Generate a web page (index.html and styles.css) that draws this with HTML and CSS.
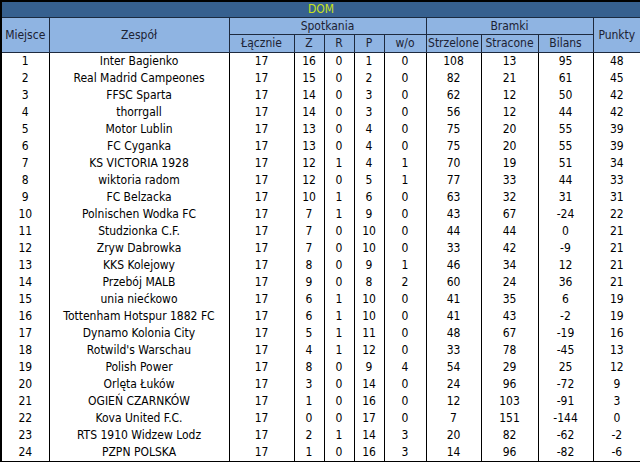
FILE: index.html
```html
<!DOCTYPE html>
<html lang="pl">
<head>
<meta charset="utf-8">
<title>DOM</title>
<link rel="stylesheet" href="styles.css">
</head>
<body>
<table class="league">
  <colgroup>
    <col class="c-pos"><col class="c-team"><col class="c-tot"><col class="c-s"><col class="c-s"><col class="c-s"><col class="c-wo"><col class="c-g1"><col class="c-g2"><col class="c-g3"><col class="c-pts">
  </colgroup>
  <thead>
    <tr class="title-row"><th colspan="11">DOM</th></tr>
    <tr class="head1">
      <th rowspan="2">Miejsce</th>
      <th rowspan="2">Zespół</th>
      <th colspan="5">Spotkania</th>
      <th colspan="3">Bramki</th>
      <th rowspan="2">Punkty</th>
    </tr>
    <tr class="head2">
      <th>Łącznie</th><th>Z</th><th>R</th><th>P</th><th>w/o</th>
      <th>Strzelone</th><th>Stracone</th><th>Bilans</th>
    </tr>
  </thead>
  <tbody>
    <tr><td>1</td><td>Inter Bagienko</td><td>17</td><td>16</td><td>0</td><td>1</td><td>0</td><td>108</td><td>13</td><td>95</td><td>48</td></tr>
    <tr><td>2</td><td>Real Madrid Campeones</td><td>17</td><td>15</td><td>0</td><td>2</td><td>0</td><td>82</td><td>21</td><td>61</td><td>45</td></tr>
    <tr><td>3</td><td>FFSC Sparta</td><td>17</td><td>14</td><td>0</td><td>3</td><td>0</td><td>62</td><td>12</td><td>50</td><td>42</td></tr>
    <tr><td>4</td><td>thorrgall</td><td>17</td><td>14</td><td>0</td><td>3</td><td>0</td><td>56</td><td>12</td><td>44</td><td>42</td></tr>
    <tr><td>5</td><td>Motor Lublin</td><td>17</td><td>13</td><td>0</td><td>4</td><td>0</td><td>75</td><td>20</td><td>55</td><td>39</td></tr>
    <tr><td>6</td><td>FC Cyganka</td><td>17</td><td>13</td><td>0</td><td>4</td><td>0</td><td>75</td><td>20</td><td>55</td><td>39</td></tr>
    <tr><td>7</td><td>KS VICTORIA 1928</td><td>17</td><td>12</td><td>1</td><td>4</td><td>1</td><td>70</td><td>19</td><td>51</td><td>34</td></tr>
    <tr><td>8</td><td>wiktoria radom</td><td>17</td><td>12</td><td>0</td><td>5</td><td>1</td><td>77</td><td>33</td><td>44</td><td>33</td></tr>
    <tr><td>9</td><td>FC Belzacka</td><td>17</td><td>10</td><td>1</td><td>6</td><td>0</td><td>63</td><td>32</td><td>31</td><td>31</td></tr>
    <tr><td>10</td><td>Polnischen Wodka FC</td><td>17</td><td>7</td><td>1</td><td>9</td><td>0</td><td>43</td><td>67</td><td>-24</td><td>22</td></tr>
    <tr><td>11</td><td>Studzionka C.F.</td><td>17</td><td>7</td><td>0</td><td>10</td><td>0</td><td>44</td><td>44</td><td>0</td><td>21</td></tr>
    <tr><td>12</td><td>Zryw Dabrowka</td><td>17</td><td>7</td><td>0</td><td>10</td><td>0</td><td>33</td><td>42</td><td>-9</td><td>21</td></tr>
    <tr><td>13</td><td>KKS Kolejowy</td><td>17</td><td>8</td><td>0</td><td>9</td><td>1</td><td>46</td><td>34</td><td>12</td><td>21</td></tr>
    <tr><td>14</td><td>Przebój MALB</td><td>17</td><td>9</td><td>0</td><td>8</td><td>2</td><td>60</td><td>24</td><td>36</td><td>21</td></tr>
    <tr><td>15</td><td>unia niećkowo</td><td>17</td><td>6</td><td>1</td><td>10</td><td>0</td><td>41</td><td>35</td><td>6</td><td>19</td></tr>
    <tr><td>16</td><td>Tottenham Hotspur 1882 FC</td><td>17</td><td>6</td><td>1</td><td>10</td><td>0</td><td>41</td><td>43</td><td>-2</td><td>19</td></tr>
    <tr><td>17</td><td>Dynamo Kolonia City</td><td>17</td><td>5</td><td>1</td><td>11</td><td>0</td><td>48</td><td>67</td><td>-19</td><td>16</td></tr>
    <tr><td>18</td><td>Rotwild's Warschau</td><td>17</td><td>4</td><td>1</td><td>12</td><td>0</td><td>33</td><td>78</td><td>-45</td><td>13</td></tr>
    <tr><td>19</td><td>Polish Power</td><td>17</td><td>8</td><td>0</td><td>9</td><td>4</td><td>54</td><td>29</td><td>25</td><td>12</td></tr>
    <tr><td>20</td><td>Orlęta Łuków</td><td>17</td><td>3</td><td>0</td><td>14</td><td>0</td><td>24</td><td>96</td><td>-72</td><td>9</td></tr>
    <tr><td>21</td><td>OGIEŃ CZARNKÓW</td><td>17</td><td>1</td><td>0</td><td>16</td><td>0</td><td>12</td><td>103</td><td>-91</td><td>3</td></tr>
    <tr><td>22</td><td>Kova United F.C.</td><td>17</td><td>0</td><td>0</td><td>17</td><td>0</td><td>7</td><td>151</td><td>-144</td><td>0</td></tr>
    <tr><td>23</td><td>RTS 1910 Widzew Lodz</td><td>17</td><td>2</td><td>1</td><td>14</td><td>3</td><td>20</td><td>82</td><td>-62</td><td>-2</td></tr>
    <tr><td>24</td><td>PZPN POLSKA</td><td>17</td><td>1</td><td>0</td><td>16</td><td>3</td><td>14</td><td>96</td><td>-82</td><td>-6</td></tr>
  </tbody>
</table>
</body>
</html>
```

FILE: styles.css
```css
html, body {
  margin: 0;
  padding: 0;
  background: #ffffff;
}

.league {
  width: 640px;
  table-layout: fixed;
  border-collapse: collapse;
  border: 2px solid #000;
  font-family: "DejaVu Sans Condensed", "DejaVu Sans", sans-serif;
  font-size: 12px;
  color: #000;
}

.c-pos { width: 48px; }
.c-team { width: 180px; }
.c-tot { width: 65px; }
.c-s { width: 30px; }
.c-wo { width: 42px; }
.c-g1 { width: 55px; }
.c-g2 { width: 57px; }
.c-g3 { width: 55px; }
.c-pts { width: 48px; }

.league th,
.league td {
  padding: 0;
  text-align: center;
  white-space: nowrap;
  overflow: hidden;
  font-weight: normal;
}

.title-row th {
  background: #36608f;
  color: #c9e21a;
  height: 15px;
  line-height: 15px;
  border-bottom: 1px solid #1a2a40;
}

.head1 th,
.head2 th {
  background: #8fb4e2;
  color: #1c2233;
  border: 1px solid #1e2a3e;
  height: 16px;
  line-height: 16px;
}

.head2 th {
  height: 17px;
  line-height: 17px;
}

.league td {
  height: 17px;
  line-height: 17px;
  border-left: 1px solid #000;
  border-right: 1px solid #000;
}
```
